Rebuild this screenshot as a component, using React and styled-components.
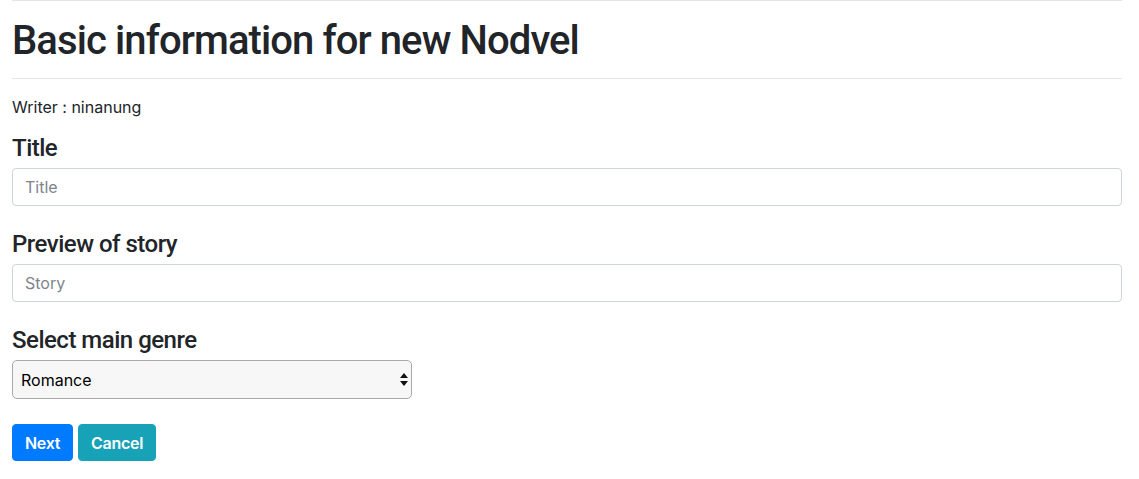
import React from "react";
import styled, { createGlobalStyle } from "styled-components";

const Global = createGlobalStyle`
  html, body { margin: 0; padding: 0; background: #fff; }
  body {
    font-family: Inter, "Liberation Sans", Arial, sans-serif;
    font-size: 16px;
    line-height: 1.5;
    color: #212529;
  }
  * { box-sizing: border-box; }
`;

const Page = styled.div`
  width: 1110px;
  margin: 0 0 0 12px;
`;

const Rule = styled.hr`
  border: 0;
  border-top: 1px solid #e5e5e5;
  margin: 0;
  height: 0;
`;

const Heading = styled.h1`
  font-family: Roboto, "Liberation Sans", Arial, sans-serif;
  font-size: 40px;
  font-weight: 500;
  line-height: 48px;
  letter-spacing: -0.9px;
  margin: 16px 0 13px;
`;

const Writer = styled.p`
  margin: 16px 0 15px;
  font-size: 16px;
  line-height: 24px;
`;

const Group = styled.div`
  margin-bottom: 24px;
`;

const Label = styled.label`
  display: block;
  font-family: Roboto, "Liberation Sans", Arial, sans-serif;
  font-size: 24px;
  font-weight: 500;
  line-height: 29px;
  letter-spacing: -0.5px;
  margin-bottom: 5px;
`;

const Input = styled.input`
  display: block;
  width: 100%;
  height: 38px;
  padding: 6px 12px;
  font-family: inherit;
  font-size: 16px;
  line-height: 24px;
  color: #495057;
  background: #fff;
  border: 1px solid #ced4da;
  border-radius: 4px;
  outline: none;
  &::placeholder { color: #7d858c; opacity: 1; }
`;

const SelectWrap = styled.div`
  position: relative;
  width: 400px;
  height: 39px;
`;

const Select = styled.select`
  appearance: none;
  -webkit-appearance: none;
  width: 100%;
  height: 100%;
  padding: 0 24px 0 8px;
  font-family: inherit;
  font-size: 16px;
  color: #000;
  background: #f7f7f7;
  border: 1px solid #a9a9a9;
  border-radius: 5px;
  outline: none;
`;

const Arrows = styled.svg`
  position: absolute;
  right: 4px;
  top: 13px;
  width: 8px;
  height: 13px;
  pointer-events: none;
`;

const Buttons = styled.div`
  display: flex;
  gap: 5px;
  margin-top: 25px;
`;

const Button = styled.button`
  height: 37px;
  padding: 0 12px;
  font-family: inherit;
  font-size: 16px;
  font-weight: 600;
  letter-spacing: -0.3px;
  color: #fff;
  background: ${(p) => p.$bg};
  border: 1px solid ${(p) => p.$bg};
  border-radius: 4px;
  cursor: pointer;
`;

export default function App() {
  return (
    <>
      <Global />
      <Page>
        <Rule />
        <Heading>Basic information for new Nodvel</Heading>
        <Rule />
        <Writer>Writer : ninanung</Writer>
        <Group>
          <Label>Title</Label>
          <Input placeholder="Title" />
        </Group>
        <Group>
          <Label>Preview of story</Label>
          <Input placeholder="Story" />
        </Group>
        <Group>
          <Label>Select main genre</Label>
          <SelectWrap>
            <Select defaultValue="Romance">
              <option>Romance</option>
              <option>Fantasy</option>
              <option>Mystery</option>
            </Select>
            <Arrows viewBox="0 0 8 13">
              <path d="M4 0 L8 5 L0 5 Z" fill="#111" />
              <path d="M0 8 L8 8 L4 13 Z" fill="#111" />
            </Arrows>
          </SelectWrap>
        </Group>
        <Buttons>
          <Button $bg="#007bff">Next</Button>
          <Button $bg="#17a2b8">Cancel</Button>
        </Buttons>
      </Page>
    </>
  );
}
